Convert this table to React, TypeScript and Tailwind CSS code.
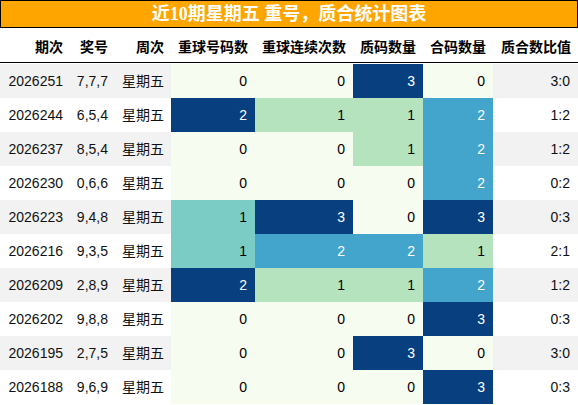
import React from "react";

const rows: [string, string, number, number, number, number, string][] = [
  ["2026251", "7,7,7", 0, 0, 3, 0, "3:0"],
  ["2026244", "6,5,4", 2, 1, 1, 2, "1:2"],
  ["2026237", "8,5,4", 0, 0, 1, 2, "1:2"],
  ["2026230", "0,6,6", 0, 0, 0, 2, "0:2"],
  ["2026223", "9,4,8", 1, 3, 0, 3, "0:3"],
  ["2026216", "9,3,5", 1, 2, 2, 1, "2:1"],
  ["2026209", "2,8,9", 2, 1, 1, 2, "1:2"],
  ["2026202", "9,8,8", 0, 0, 0, 3, "0:3"],
  ["2026195", "2,7,5", 0, 0, 3, 0, "3:0"],
  ["2026188", "9,6,9", 0, 0, 0, 3, "0:3"],
];

// 重球号码数 max is 2, the others max 3
const scale2 = ["bg-[#f7fcf0] text-black", "bg-[#7bccc4] text-black", "bg-[#08407f] text-white"];
const scale3 = [
  "bg-[#f7fcf0] text-black",
  "bg-[#b5e3bd] text-black",
  "bg-[#43a5cb] text-white",
  "bg-[#08407f] text-white",
];

const headers = ["期次", "奖号", "周次", "重球号码数", "重球连续次数", "质码数量", "合码数量", "质合数比值"];

const cols = "grid grid-cols-[70px_45px_56px_84px_98px_70px_70px_85px]";

export default function App() {
  return (
    <div
      className="w-[578px] h-[405px] bg-white overflow-hidden"
      style={{ fontFamily: '"Liberation Sans", "Noto Sans CJK SC", sans-serif' }}
    >
      <div
        className="h-[28px] bg-[#ffa500] border border-black flex items-center justify-center text-white font-bold text-[18px]"
        style={{ fontFamily: '"Liberation Serif", "Noto Sans CJK SC", serif' }}
      >
        近10期星期五 重号，质合统计图表
      </div>
      <div className={`${cols} h-[35px] border-b border-black`}>
        {headers.map((h) => (
          <div key={h} className="flex items-center justify-end pr-[7px] pt-1 font-bold text-[14px] text-black">
            {h}
          </div>
        ))}
      </div>
      <div className="pt-px">
        {rows.map((r, i) => {
          const stripe = i % 2 === 0 ? "bg-[#f2f2f2]" : "bg-white";
          return (
            <div key={r[0]} className={`${cols} h-[34px] text-[14px] text-[#111]`}>
              <div className={`${stripe} flex items-center justify-end pr-[7px]`}>{r[0]}</div>
              <div className={`${stripe} flex items-center justify-end pr-[7px]`}>{r[1]}</div>
              <div className={`${stripe} flex items-center justify-end pr-[7px]`}>星期五</div>
              <div className={`${scale2[r[2]]} flex items-center justify-end pr-[8px]`}>{r[2]}</div>
              <div className={`${scale3[r[3]]} flex items-center justify-end pr-[8px]`}>{r[3]}</div>
              <div className={`${scale3[r[4]]} flex items-center justify-end pr-[8px]`}>{r[4]}</div>
              <div className={`${scale3[r[5]]} flex items-center justify-end pr-[8px]`}>{r[5]}</div>
              <div className={`${stripe} flex items-center justify-end pr-[8px]`}>{r[6]}</div>
            </div>
          );
        })}
      </div>
    </div>
  );
}
